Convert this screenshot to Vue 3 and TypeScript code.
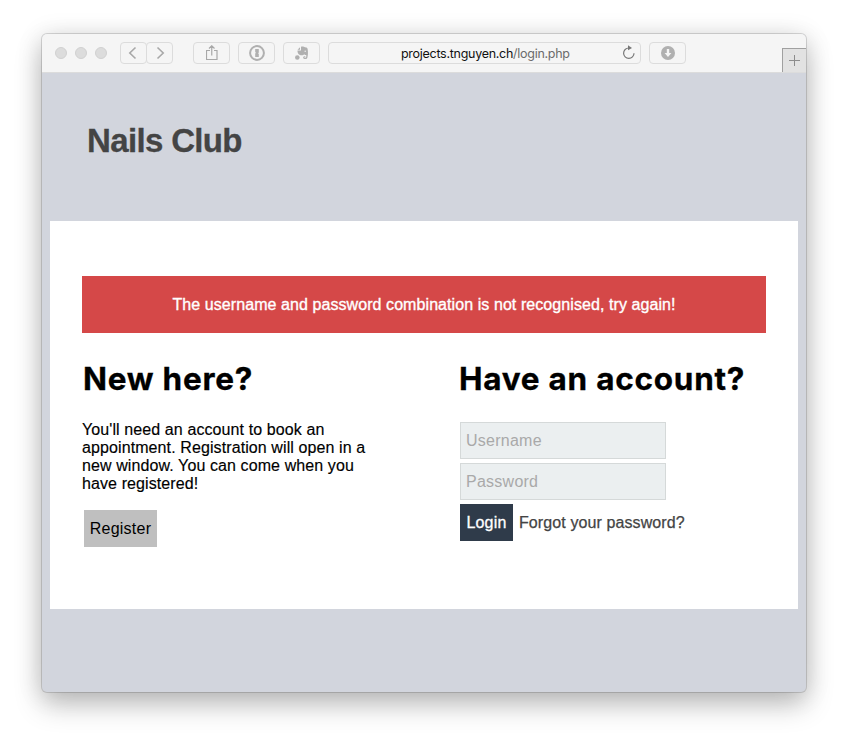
<script setup lang="ts">
import { ref } from 'vue'

const username = ref('')
const password = ref('')
const intro: string[] = [
  "You'll need an account to book an",
  'appointment. Registration will open in a',
  'new window. You can come when you',
  'have registered!',
]
</script>

<template>
  <div class="desktop">
    <div class="window">
      <header class="toolbar">
        <div class="lights"><i></i><i></i><i></i></div>
        <div class="nav">
          <button class="tool nav-btn" aria-label="Back">
            <svg width="11" height="14" viewBox="0 0 11 14"><path d="M7.500 1.500 1.800 7l5.700 5.500" /></svg>
          </button>
          <button class="tool nav-btn" aria-label="Forward">
            <svg width="11" height="14" viewBox="0 0 11 14"><path d="M3.500 1.500 9.200 7l-5.700 5.500" /></svg>
          </button>
        </div>
        <button class="tool share" aria-label="Share">
          <svg width="12" height="16" viewBox="0 0 12 16"><path class="thin" d="M4 5.500H.5v9h10.500v-9H8M5.750 10.500V.8M3 3.500 5.750.8 8.500 3.500" /></svg>
        </button>
        <button class="tool" aria-label="Passwords">
          <svg width="16" height="16" viewBox="0 0 16 16"><circle class="ring" cx="8" cy="8" r="6.900" /><path class="solid" d="M6.200 4h3.600v3.400l-.7.900.7.800V12H6.200V8.600l.7-.9-.7-.8z" /></svg>
        </button>
        <button class="tool" aria-label="Clipper">
          <svg width="14" height="14" viewBox="0 0 14 14">
            <path class="solid" d="M5 1.200 2.500 3.700H5zM6 .8c2-.8 3 .2 4 .5 2 .1 2.500.5 2.700 2.200.5 3 .3 6-.3 8-.4 1.500-1.300 1.700-3 1.500-1.700-.2-1.700-2.700-.1-2.800h1v1h-.8c-.5.700.8.900 1.300.4.600-.7.500-1.600.4-2.600-1.100.2-1.500.1-2.100-.7C8.500 9.500 6 9.600 4.500 8.800 3 8 2.400 6.400 2.500 4.600H6z" />
            <circle class="solid" cx="2.300" cy="11.500" r="2.300" /><circle class="eye" cx="10.200" cy="5.300" r=".7" />
          </svg>
        </button>
        <div class="address">
          <span class="host">projects.tnguyen.ch</span><span class="path">/login.php</span>
          <svg class="reload" width="14" height="15" viewBox="0 0 14 15"><path d="M6.800 3A5.200 5.200 0 1 0 12 8.200" /><path class="head" d="M6 .2 10 3 6 5.300z" /></svg>
        </div>
        <button class="tool download" aria-label="Downloads">
          <svg width="14" height="14" viewBox="0 0 14 14"><circle class="solid" cx="7" cy="7" r="7" /><path class="arrow" d="M5.800 3h2.400v4h2.200L7 10.900 3.600 7h2.200z" /></svg>
        </button>
        <button class="new-tab" aria-label="New tab">
          <svg width="11" height="11" viewBox="0 0 11 11"><path d="M5.500 0v11M0 5.500h11" /></svg>
        </button>
      </header>

      <div class="page">
        <h1>Nails Club</h1>
        <main class="panel">
          <div class="alert"><span>The username and password combination is not recognised, try again!</span></div>
          <div class="columns">
            <section>
              <h2>New here?</h2>
              <p><span v-for="line in intro" :key="line">{{ line }}</span></p>
              <button class="register">Register</button>
            </section>
            <section>
              <h2>Have an account?</h2>
              <form @submit.prevent>
                <input v-model="username" type="text" placeholder="Username" />
                <input v-model="password" type="password" placeholder="Password" />
                <div class="actions">
                  <button class="login" type="submit">Login</button>
                  <a>Forgot your password?</a>
                </div>
              </form>
            </section>
          </div>
        </main>
      </div>
    </div>
  </div>
</template>

<style>
body { margin: 0; background: #fff; }
</style>

<style scoped>
* { box-sizing: border-box; }
button, input { font: inherit; margin: 0; border-radius: 0; }
.desktop {
  height: 742px;
  padding: 34px 42px 50px;
  overflow: hidden;
  font-family: "Liberation Sans", Arial, sans-serif;
  font-size: 16px;
}
.window {
  height: 658px;
  border-radius: 5px;
  overflow: hidden;
  background: #d2d5dd;
  box-shadow: 0 0 0 1px rgba(0, 0, 0, .14), 0 13px 28px rgba(0, 0, 0, .23), 0 2px 26px rgba(0, 0, 0, .13);
}
.toolbar {
  height: 39px;
  display: flex;
  align-items: center;
  padding-left: 13px;
  background: #f5f5f5;
  border-bottom: 1px solid #dcdcdc;
}
.lights { display: flex; gap: 8px; width: 65px; }
.lights i { width: 12px; height: 12px; border-radius: 50%; background: #dcdcdc; border: 1px solid #d1d1d1; }
.nav { display: flex; margin-right: 20px; }
.tool {
  width: 37px;
  height: 22px;
  margin-right: 8px;
  padding: 0;
  display: flex;
  align-items: center;
  justify-content: center;
  flex: none;
  border: 1px solid #dcdcdc;
  border-radius: 4px;
  background: #f5f5f5;
}
.nav .nav-btn { width: 27px; margin-right: 0; }
.nav .nav-btn + .nav-btn { margin-left: -1px; }
.tool svg { fill: none; stroke: #a8a8a8; stroke-width: 1.6; }
.tool .thin { stroke-width: 1.2; }
.tool .ring { stroke-width: 2; stroke: #b0b0b0; }
.tool .solid { fill: #b0b0b0; stroke: none; }
.tool .arrow, .tool .eye { fill: #f5f5f5; stroke: none; }
.address {
  width: 313px;
  height: 22px;
  flex: none;
  display: flex;
  align-items: center;
  margin-right: 8px;
  padding: 1px 4px 0 72px;
  border: 1px solid #dcdcdc;
  border-radius: 4px;
  font: 12.500px Inter, sans-serif;
  letter-spacing: -.28px;
}
.host { color: #111; }
.path { color: #6b6b6b; }
.reload { margin: -2px 0 0 auto; fill: none; stroke: #777; stroke-width: 1.2; }
.reload .head { fill: #777; stroke: none; }
.download { margin-right: 0; }
.new-tab {
  width: 24px;
  height: 24px;
  margin-left: auto;
  align-self: flex-end;
  flex: none;
  display: flex;
  align-items: center;
  justify-content: center;
  padding: 0;
  border: solid #a0a0a0;
  border-width: 1px 0 0 1px;
  background: #e2e2e2;
}
.new-tab svg { stroke: #8c8c8c; stroke-width: 1; }
.page { padding: 0 8px; }
h1 {
  height: 148px;
  margin: 0;
  padding: 49px 0 0 37px;
  font-size: 33px;
  line-height: 38px;
  letter-spacing: -.65px;
  color: #444;
  -webkit-text-stroke: .3px #444;
}
.panel { height: 388px; padding: 55px 32px 0; background: #fff; }
.alert {
  height: 57px;
  display: flex;
  align-items: center;
  justify-content: center;
  background: #d54848;
  color: #fff;
  white-space: nowrap;
  letter-spacing: .075px;
  -webkit-text-stroke: .35px #fff;
}
.columns { display: grid; grid-template-columns: 376px 1fr; padding-top: 26px; }
h2 {
  margin: 0;
  padding-left: 1px;
  height: 40px;
  font: 700 31.500px/40px Inter, sans-serif;
  letter-spacing: .75px;
  color: #000;
  white-space: nowrap;
  -webkit-text-stroke: .3px #000;
}
p { margin: 22px 0 0; line-height: 18px; color: #000; letter-spacing: .1px; -webkit-text-stroke: .15px #000; }
p span { display: block; white-space: nowrap; }
.register {
  display: block;
  width: 73px;
  height: 37px;
  margin: 17px 0 0 2px;
  padding: 0;
  border: 0;
  background: #bfbfbf;
  color: #000;
  letter-spacing: .25px;
}
form { display: flex; flex-direction: column; gap: 4px; padding: 23px 0 0 2px; }
input {
  width: 206px;
  height: 37px;
  padding: 0 5px;
  border: 1px solid #d5d9d9;
  background: #ebeff0;
}
input::placeholder { color: #a9a9a9; opacity: 1; letter-spacing: .25px; }
.actions { display: flex; align-items: center; gap: 6px; }
.login { width: 53px; height: 37px; padding: 0; border: 0; background: #2f3b4a; color: #fff; letter-spacing: .2px; -webkit-text-stroke: .3px #fff; }
.actions a { color: #444; white-space: nowrap; letter-spacing: .1px; -webkit-text-stroke: .25px #444; }
</style>
